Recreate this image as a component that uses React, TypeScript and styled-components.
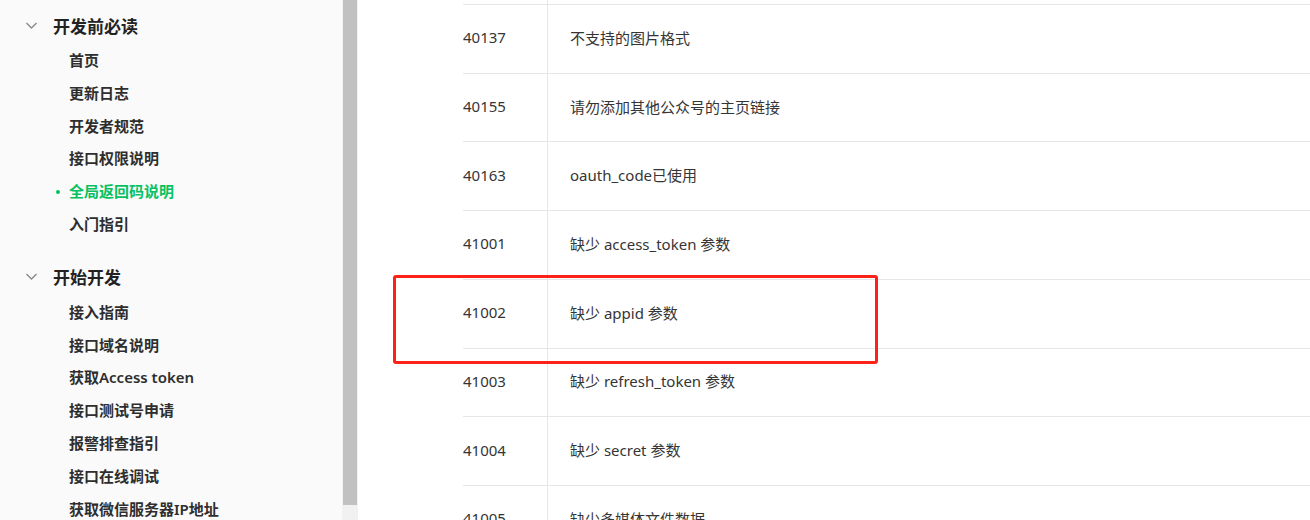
import React from 'react'
import styled, { createGlobalStyle } from 'styled-components'

const GlobalStyle = createGlobalStyle`
  html, body {
    margin: 0;
    padding: 0;
    height: 520px;
    overflow: hidden;
    background: #fff;
  }
  body {
    font-family: "Noto Sans", "Noto Sans CJK SC", sans-serif;
    color: #353535;
  }
`

const Page = styled.div`
  display: flex;
  width: 1310px;
  height: 520px;
  overflow: hidden;
`

const Sidebar = styled.aside`
  width: 342px;
  flex: none;
  background: #fafafa;
  padding-top: 6px;
  box-sizing: border-box;
`

const Group = styled.section`
  & + & {
    margin-top: 17px;
  }
`

const GroupHead = styled.div`
  display: flex;
  align-items: center;
  height: 38px;
  padding-left: 25px;
  font-family: "Noto Sans CJK SC", sans-serif;
  font-size: 17px;
  font-weight: 700;
  color: #222;
  svg {
    width: 13px;
    height: 13px;
    margin-right: 15px;
    flex: none;
  }
`

const Item = styled.div<{ $active?: boolean }>`
  position: relative;
  height: 32.8px;
  line-height: 32.8px;
  padding-left: 69px;
  font-family: "Noto Sans", "Noto Sans CJK SC", sans-serif;
  font-size: 15px;
  font-weight: 600;
  color: ${({ $active }) => ($active ? '#07c160' : '#2e2e2e')};
  white-space: nowrap;
  &::before {
    content: '';
    display: ${({ $active }) => ($active ? 'block' : 'none')};
    position: absolute;
    left: 56px;
    top: 15px;
    width: 4px;
    height: 4px;
    border-radius: 50%;
    background: #07c160;
  }
`

const Track = styled.div`
  width: 16px;
  flex: none;
  background: #f1f1f1;
  display: flex;
  justify-content: center;
`

const Thumb = styled.div`
  width: 14px;
  height: 505px;
  background: #c1c1c1;
`

const Main = styled.main`
  flex: 1;
  position: relative;
  padding-left: 105px;
  background: #fff;
`

const Table = styled.div`
  display: grid;
  grid-template-columns: 85px 1fr;
  font-size: 15px;
  color: #353535;
`

const Row = styled.div<{ $stub?: boolean }>`
  display: contents;
  & > div {
    height: ${({ $stub }) => ($stub ? '5px' : '68.71px')};
    box-sizing: border-box;
    padding-bottom: ${({ $stub }) => ($stub ? '0' : '3px')};
    border-bottom: 1px solid #e6e6e6;
    display: flex;
    align-items: center;
    white-space: nowrap;
  }
`

const Code = styled.div`
  border-right: 1px solid #e6e6e6;
`

const Desc = styled.div`
  padding-left: 22px;
`

const Mark = styled.div`
  position: absolute;
  left: 35px;
  top: 275px;
  width: 485px;
  height: 89px;
  box-sizing: border-box;
  border: 3px solid #fc2218;
  border-radius: 3px;
`

const Chevron = () => (
  <svg viewBox="0 0 13 13" fill="none">
    <polyline points="1.5,4 6.5,9 11.5,4" stroke="#8a8a8a" strokeWidth="1.4" />
  </svg>
)

const groups = [
  {
    title: '开发前必读',
    items: ['首页', '更新日志', '开发者规范', '接口权限说明', '全局返回码说明', '入门指引'],
  },
  {
    title: '开始开发',
    items: ['接入指南', '接口域名说明', '获取Access token', '接口测试号申请', '报警排查指引', '接口在线调试', '获取微信服务器IP地址'],
  },
]

const codes: [string, string][] = [
  ['40137', '不支持的图片格式'],
  ['40155', '请勿添加其他公众号的主页链接'],
  ['40163', 'oauth_code已使用'],
  ['41001', '缺少 access_token 参数'],
  ['41002', '缺少 appid 参数'],
  ['41003', '缺少 refresh_token 参数'],
  ['41004', '缺少 secret 参数'],
  ['41005', '缺少多媒体文件数据'],
]

export default function App() {
  return (
    <>
      <GlobalStyle />
      <Page>
        <Sidebar>
          {groups.map(g => (
            <Group key={g.title}>
              <GroupHead>
                <Chevron />
                {g.title}
              </GroupHead>
              {g.items.map(it => (
                <Item key={it} $active={it === '全局返回码说明'}>{it}</Item>
              ))}
            </Group>
          ))}
        </Sidebar>
        <Track>
          <Thumb />
        </Track>
        <Main>
          <Table>
            <Row $stub>
              <Code />
              <Desc />
            </Row>
            {codes.map(([c, d]) => (
              <Row key={c}>
                <Code>{c}</Code>
                <Desc>{d}</Desc>
              </Row>
            ))}
          </Table>
          <Mark />
        </Main>
      </Page>
    </>
  )
}
